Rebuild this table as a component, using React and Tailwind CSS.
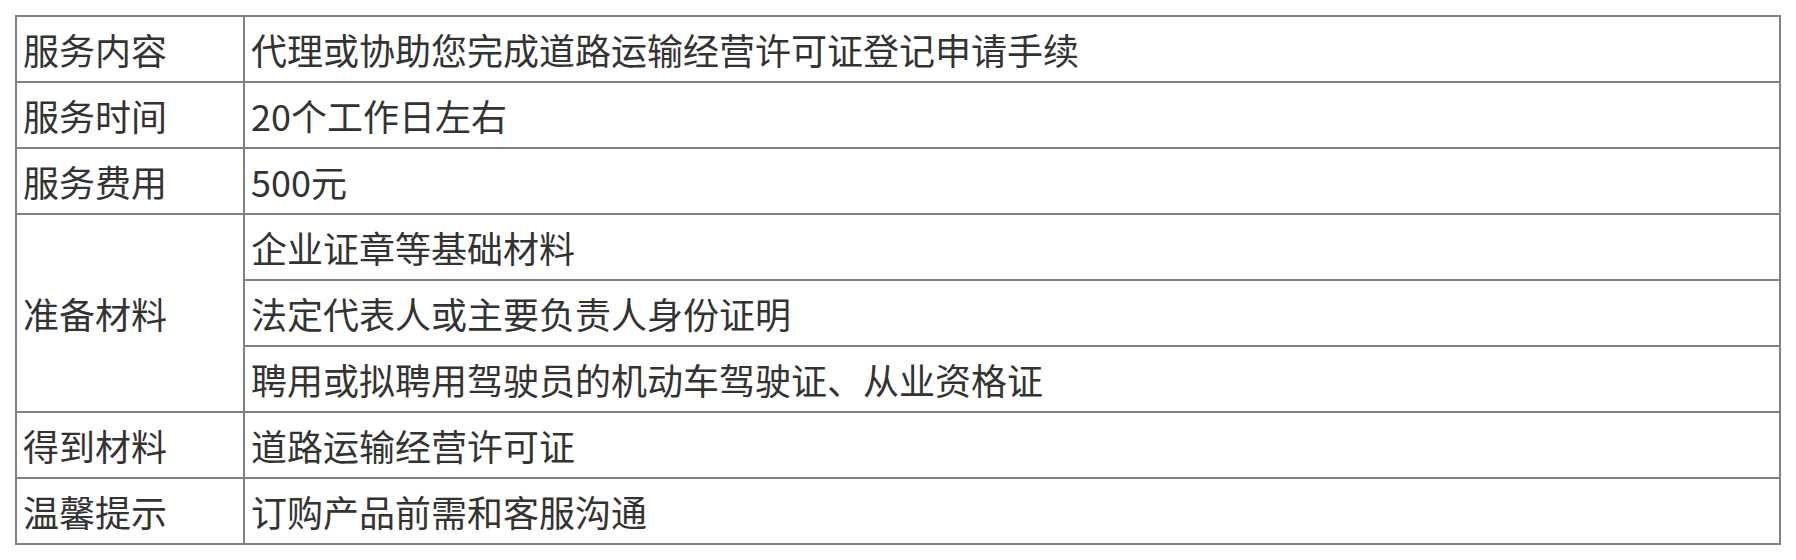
const rows = [
  { label: "服务内容", items: ["代理或协助您完成道路运输经营许可证登记申请手续"] },
  { label: "服务时间", items: ["20个工作日左右"] },
  { label: "服务费用", items: ["500元"] },
  {
    label: "准备材料",
    items: [
      "企业证章等基础材料",
      "法定代表人或主要负责人身份证明",
      "聘用或拟聘用驾驶员的机动车驾驶证、从业资格证",
    ],
  },
  { label: "得到材料", items: ["道路运输经营许可证"] },
  { label: "温馨提示", items: ["订购产品前需和客服沟通"] },
];

export default function App() {
  return (
    <div
      className="bg-white p-[15px] text-[36px] leading-none text-[#333333]"
      style={{ fontFamily: '"Noto Sans CJK SC", "Noto Sans", sans-serif' }}
    >
      <table className="w-[1766px] border-separate border-spacing-0 border-t-2 border-l-2 border-[#808080]">
        <tbody>
          {rows.map((row) =>
            row.items.map((item, i) => (
              <tr key={row.label + i}>
                {i === 0 && (
                  <td
                    rowSpan={row.items.length}
                    className="w-[228px] border-r-2 border-b-2 border-[#808080] pl-[6px] text-left align-middle"
                  >
                    {row.label}
                  </td>
                )}
                <td className="h-[66px] border-r-2 border-b-2 border-[#808080] pl-[6px] text-left align-middle">
                  {item}
                </td>
              </tr>
            ))
          )}
        </tbody>
      </table>
    </div>
  );
}
